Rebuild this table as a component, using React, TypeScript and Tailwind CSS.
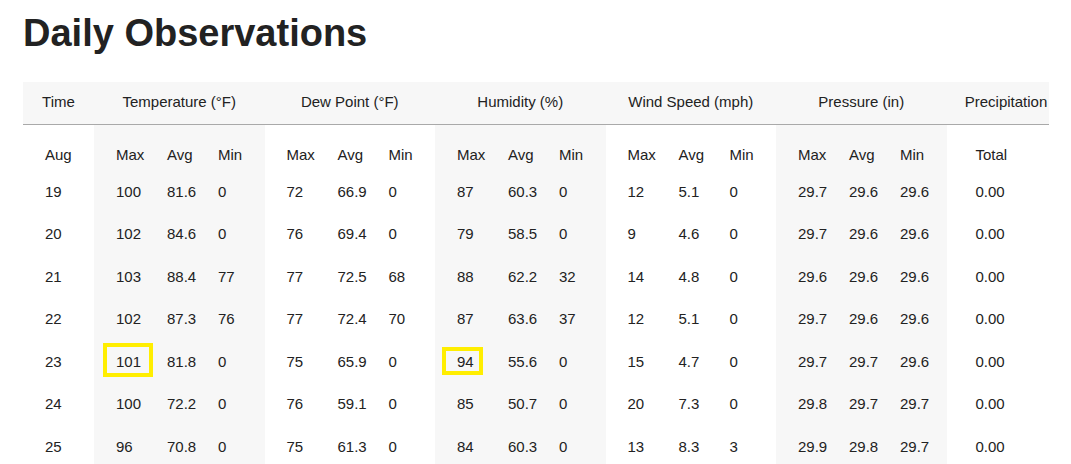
import React from "react";

const groups = [
  { label: "Temperature (°F)", shaded: true },
  { label: "Dew Point (°F)", shaded: false },
  { label: "Humidity (%)", shaded: true },
  { label: "Wind Speed (mph)", shaded: false },
  { label: "Pressure (in)", shaded: true },
];

const rows: { day: string; vals: string[][]; total: string }[] = [
  { day: "19", vals: [["100", "81.6", "0"], ["72", "66.9", "0"], ["87", "60.3", "0"], ["12", "5.1", "0"], ["29.7", "29.6", "29.6"]], total: "0.00" },
  { day: "20", vals: [["102", "84.6", "0"], ["76", "69.4", "0"], ["79", "58.5", "0"], ["9", "4.6", "0"], ["29.7", "29.6", "29.6"]], total: "0.00" },
  { day: "21", vals: [["103", "88.4", "77"], ["77", "72.5", "68"], ["88", "62.2", "32"], ["14", "4.8", "0"], ["29.6", "29.6", "29.6"]], total: "0.00" },
  { day: "22", vals: [["102", "87.3", "76"], ["77", "72.4", "70"], ["87", "63.6", "37"], ["12", "5.1", "0"], ["29.7", "29.6", "29.6"]], total: "0.00" },
  { day: "23", vals: [["101", "81.8", "0"], ["75", "65.9", "0"], ["94", "55.6", "0"], ["15", "4.7", "0"], ["29.7", "29.7", "29.6"]], total: "0.00" },
  { day: "24", vals: [["100", "72.2", "0"], ["76", "59.1", "0"], ["85", "50.7", "0"], ["20", "7.3", "0"], ["29.8", "29.7", "29.7"]], total: "0.00" },
  { day: "25", vals: [["96", "70.8", "0"], ["75", "61.3", "0"], ["84", "60.3", "0"], ["13", "8.3", "3"], ["29.9", "29.8", "29.7"]], total: "0.00" },
];

const subW = ["w-[51px]", "w-[51px]", "w-[68.5px]"];

function Group({ shaded, cells, rowIdx, groupIdx }: { shaded: boolean; cells: string[]; rowIdx?: number; groupIdx?: number }) {
  return (
    <div className={`flex h-full ${shaded ? "bg-[#f7f7f7]" : ""}`}>
      {cells.map((c, i) => {
        const hlTemp = rowIdx === 4 && groupIdx === 0 && i === 0;
        const hlHum = rowIdx === 4 && groupIdx === 2 && i === 0;
        return (
          <div key={i} className={`${subW[i]} relative flex h-full items-center pl-[22px]`}>
            {hlTemp && (
              <span className="absolute left-[9px] top-[3px] h-[34px] w-[50px] border-4 border-[#ffee00]" />
            )}
            {hlHum && (
              <span className="absolute left-[7px] top-[7px] h-[28px] w-[41px] border-4 border-[#ffee00]" />
            )}
            <span className="relative">{c}</span>
          </div>
        );
      })}
    </div>
  );
}

export default function App() {
  return (
    <div
      className="min-h-[464px] bg-white px-[23px] text-[#222]"
      style={{ fontFamily: '"Liberation Sans", Arial, sans-serif' }}
    >
      <h1 className="pt-[11px] text-[38px] font-bold leading-[44px] text-[#222]">Daily Observations</h1>
      <div className="mt-[27px] w-[1026px] overflow-hidden text-[15px] leading-[17px]">
        <div className="w-[1043px]">
          <div className="flex h-[43px] border-b border-[#a9a9a9] bg-[#f7f7f7]">
            <div className="w-[71px] pt-[11px] text-center">Time</div>
            {groups.map((g) => (
              <div key={g.label} className="w-[170.5px] pt-[11px] text-center">
                {g.label}
              </div>
            ))}
            <div className="w-[119px] pt-[11px] text-center">Precipitation</div>
          </div>
          <div className="flex h-[45px]">
            <div className="w-[71px] pl-[22px] pt-[21px]">Aug</div>
            {groups.map((g) => (
              <div key={g.label} className={`flex w-[170.5px] pt-[21px] ${g.shaded ? "bg-[#f7f7f7]" : ""}`}>
                {["Max", "Avg", "Min"].map((s, i) => (
                  <div key={s} className={`${subW[i]} pl-[22px]`}>
                    {s}
                  </div>
                ))}
              </div>
            ))}
            <div className="w-[119px] pl-[29px] pt-[21px]">Total</div>
          </div>
          {rows.map((r, ri) => (
            <div key={r.day} className="flex h-[42.5px]">
              <div className="flex w-[71px] items-center pl-[22px]">{r.day}</div>
              {groups.map((g, gi) => (
                <div key={g.label} className="w-[170.5px]">
                  <Group shaded={g.shaded} cells={r.vals[gi]} rowIdx={ri} groupIdx={gi} />
                </div>
              ))}
              <div className="flex w-[119px] items-center pl-[29px]">{r.total}</div>
            </div>
          ))}
        </div>
      </div>
    </div>
  );
}
